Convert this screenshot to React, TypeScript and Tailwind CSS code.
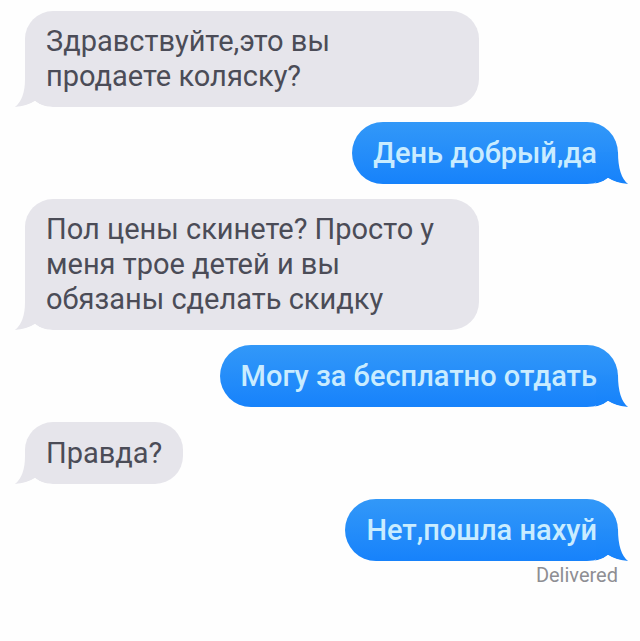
type Message = {
  text: string;
  side: "in" | "out";
};

const messages: Message[] = [
  { text: "Здравствуйте,это вы продаете коляску?", side: "in" },
  { text: "День добрый,да", side: "out" },
  {
    text: "Пол цены скинете? Просто у меня трое детей и вы обязаны сделать скидку",
    side: "in",
  },
  { text: "Могу за бесплатно отдать", side: "out" },
  { text: "Правда?", side: "in" },
  { text: "Нет,пошла нахуй", side: "out" },
];

/* ================= BUBBLES ================= */
function Incoming({ text }: { text: string }) {
  return (
    <li className="relative flex min-h-[62px] max-w-[454px] items-center self-start rounded-[28px] bg-[#e6e5eb] px-[21px] py-[13px] text-[#4b4c57]">
      <svg
        className="absolute bottom-0 -left-2.5 h-8 w-10"
        viewBox="0 0 40 32"
        aria-hidden="true"
      >
        <path d="M10 4H32V32H38Q28 32 20 26Q11 32 0 32Q10 24 10 4Z" fill="#e6e5eb" />
        {/* white gap under the tail */}
        <path d="M0 32Q12 31 20 26Q27 32 38 32Z" fill="#fefefe" />
      </svg>
      <p className="relative">{text}</p>
    </li>
  );
}

function Outgoing({ text }: { text: string }) {
  return (
    <li className="relative flex min-h-[62px] max-w-[454px] items-center self-end rounded-[31px] bg-linear-to-b from-[#3298f8] to-[#1682fb] px-[21px] py-[13px] font-medium text-[#c9ecff]">
      <svg
        className="absolute -right-2.5 bottom-0 h-8 w-10"
        viewBox="0 0 40 32"
        aria-hidden="true"
      >
        <defs>
          <linearGradient id="tail" x1="0" y1="0" x2="0" y2="1">
            <stop offset="0" stopColor="#248df9" />
            <stop offset="1" stopColor="#1682fb" />
          </linearGradient>
        </defs>
        <path d="M30 0H8V32H2Q12 32 20 26Q29 32 40 32Q30 24 30 0Z" fill="url(#tail)" />
        <path d="M40 32Q28 31 20 26Q13 32 2 32Z" fill="#fefefe" />
      </svg>
      <p className="relative">{text}</p>
    </li>
  );
}

export default function App() {
  return (
    <main className="min-h-screen bg-[#fefefe] pt-[11px] pr-[22px] pb-12 pl-[25px] font-['Roboto','Noto_Sans',sans-serif]">
      <ul className="flex flex-col gap-[15px] text-[29px] leading-[35px]">
        {messages.map((message) =>
          message.side === "in" ? (
            <Incoming key={message.text} text={message.text} />
          ) : (
            <Outgoing key={message.text} text={message.text} />
          )
        )}
      </ul>
      <p className="mt-1 text-right text-xl leading-5 text-[#8e8e93]">Delivered</p>
    </main>
  );
}
